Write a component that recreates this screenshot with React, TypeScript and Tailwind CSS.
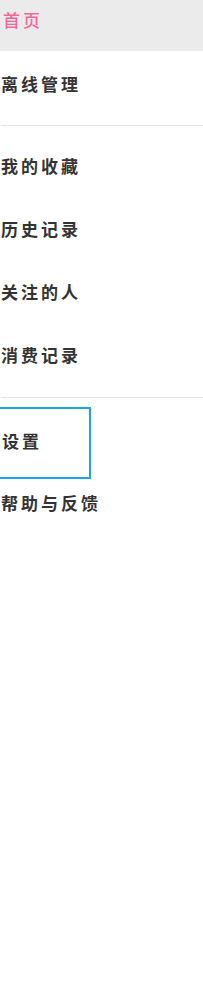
import React from "react";

const groupOne = ["我的收藏", "历史记录", "关注的人", "消费记录"];

function Row({ label, className = "" }: { label: string; className?: string }) {
  return (
    <div className={`flex h-[63px] items-center ${className}`}>
      <span className="text-[17px] font-bold tracking-[3px] text-[#333333]">{label}</span>
    </div>
  );
}

export default function App() {
  return (
    <div
      className="min-h-[999px] w-[203px] overflow-hidden bg-white pl-[1px]"
      style={{ fontFamily: '"Noto Sans CJK SC", "Noto Sans", sans-serif' }}
    >
      <div className="-ml-[1px] h-[51px] bg-[#ebebeb] pl-[3px] pt-[7px]">
        <span className="text-[17px] font-medium tracking-[3px] text-[#f2679a]">首页</span>
      </div>

      <Row label="离线管理" className="mt-[1px]" />
      <div className="mt-[10px] h-px bg-[#e4e4e4]" />

      <div className="pt-[8px] pb-[11px]">
        {groupOne.map((label) => (
          <Row key={label} label={label} />
        ))}
      </div>
      <div className="h-px bg-[#e4e4e4]" />

      <div className="-ml-[6px] mt-[9px] flex h-[72px] w-[96px] items-center border-2 border-[#1ea3e6] pb-[4px] pl-[5px]">
        <span className="text-[17px] font-bold tracking-[3px] text-[#333333]">设置</span>
      </div>
      <Row label="帮助与反馈" className="-mt-[8px]" />
    </div>
  );
}
